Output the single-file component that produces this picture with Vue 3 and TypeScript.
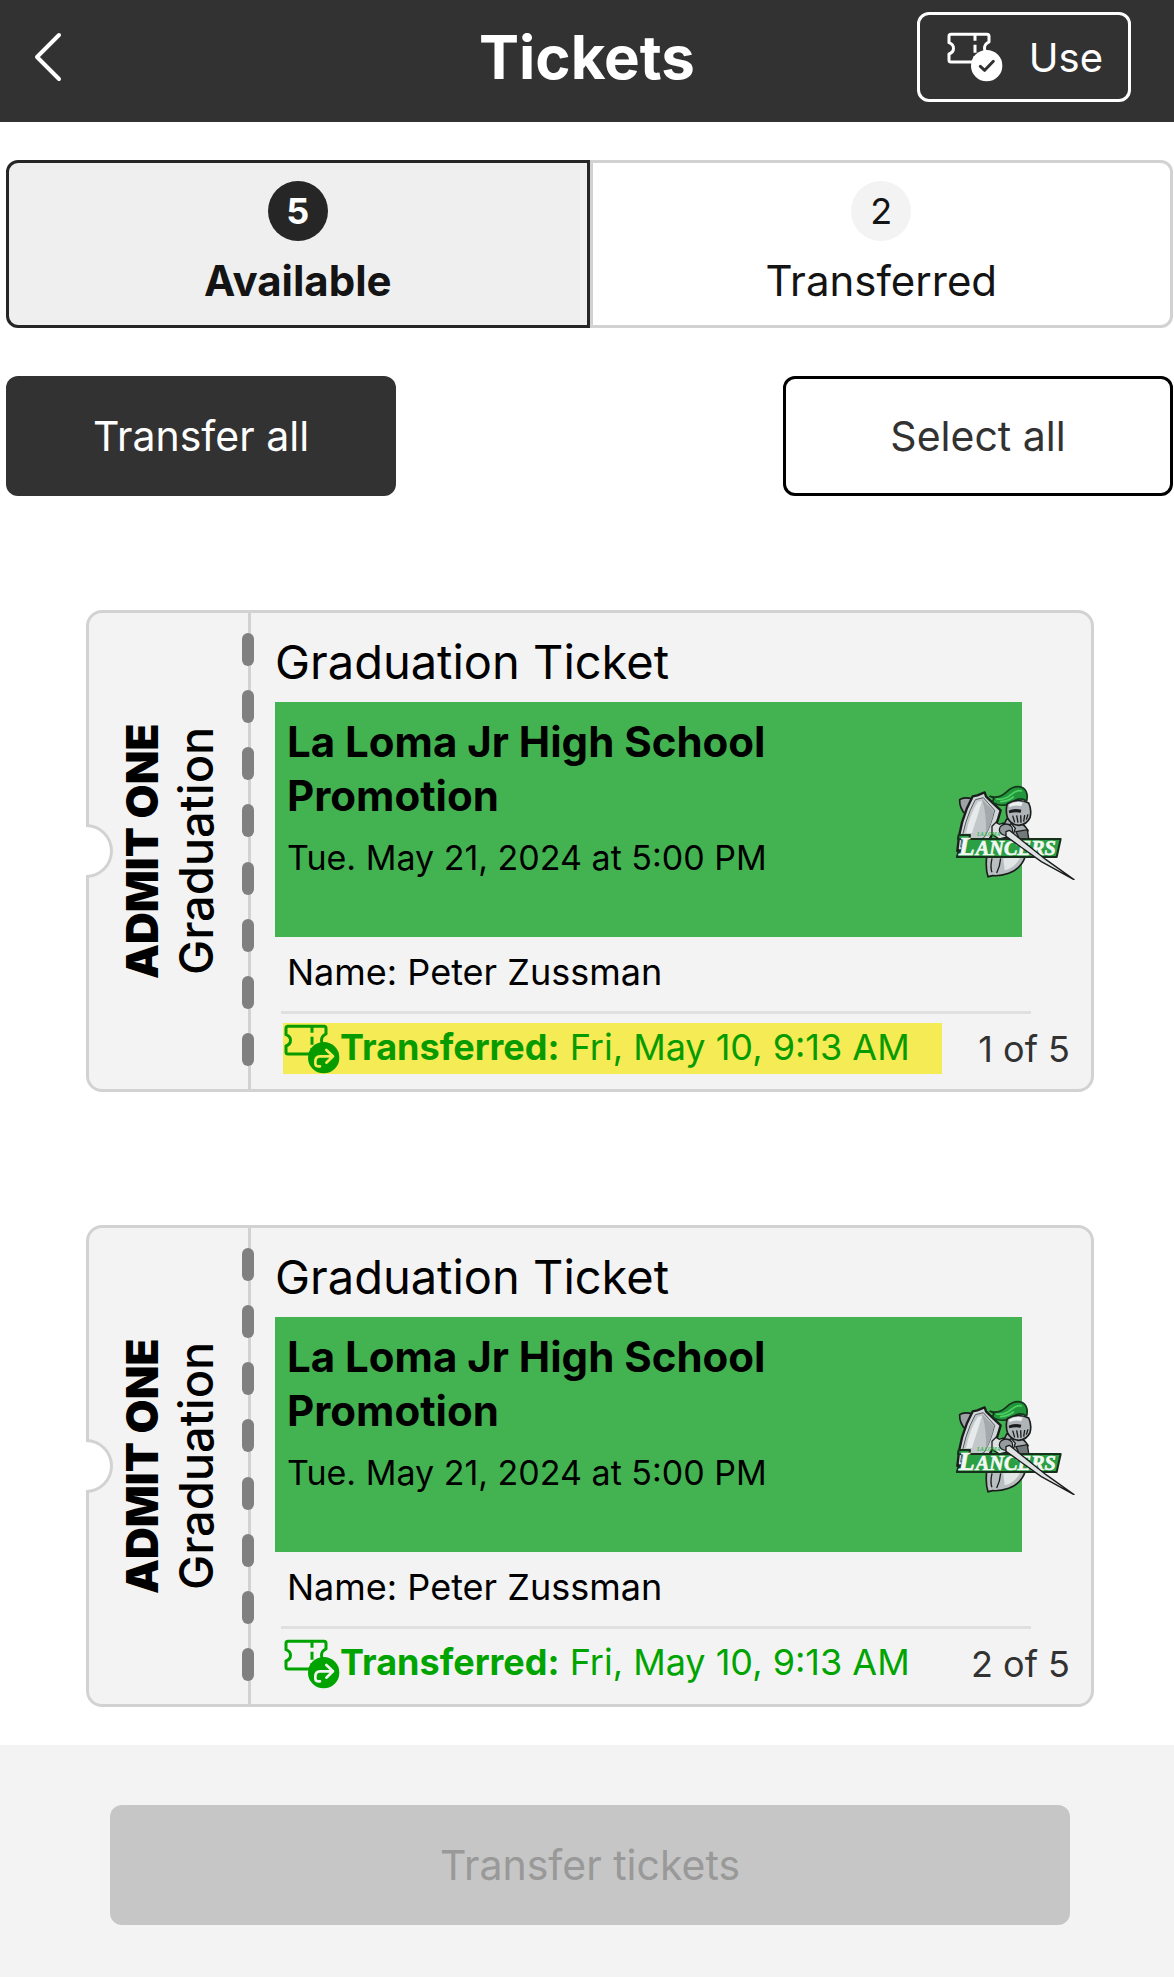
<script setup lang="ts">
import { ref } from 'vue'

interface Ticket {
  id: number
  kind: string
  category: string
  event: string
  date: string
  holder: string
  transferred: string
  highlighted: boolean
}

const totalTickets = 5
const activeTab = ref<'available' | 'transferred'>('available')

const tabs = [
  { key: 'available' as const, label: 'Available', count: 5 },
  { key: 'transferred' as const, label: 'Transferred', count: 2 },
]

const tickets: Ticket[] = [1, 2].map((id) => ({
  id,
  kind: 'Graduation Ticket',
  category: 'Graduation',
  event: 'La Loma Jr High School Promotion',
  date: 'Tue. May 21, 2024 at 5:00 PM',
  holder: 'Peter Zussman',
  transferred: 'Fri, May 10, 9:13 AM',
  highlighted: id === 1,
}))
</script>

<template>
  <div class="page">
    <header class="header">
      <button class="back" type="button" aria-label="Back">
        <svg viewBox="0 0 30 50" width="30" height="50" aria-hidden="true">
          <path d="M26 3 4 25l22 22" fill="none" stroke="#fff" stroke-width="4" stroke-linecap="round" stroke-linejoin="round" />
        </svg>
      </button>
      <h1 class="title">Tickets</h1>
      <button class="use" type="button">
        <svg class="ticket-icon" viewBox="42 46 168 150" aria-hidden="true">
          <path d="M54 53H162q6 0 6 6V76c-18 8-18 30 0 36V132q0 4-6 4H54q-6 0-6-6V112c18-6 18-28 0-34V59q0-6 6-6Z" fill="none" stroke="currentColor" stroke-width="9" stroke-linejoin="round" />
          <path d="M126 54v18M126 84v24M126 118v18" stroke="currentColor" stroke-width="9" />
          <circle cx="161" cy="147" r="47" fill="currentColor" />
          <path d="M142 149l13 12 26-27" fill="none" stroke="#323232" stroke-width="9" stroke-linecap="round" stroke-linejoin="round" />
        </svg>
        <span>Use</span>
      </button>
    </header>

    <main class="content">
      <div class="tabs" role="tablist">
        <button
          v-for="tab in tabs"
          :key="tab.key"
          class="tab"
          :class="{ active: activeTab === tab.key }"
          type="button"
          role="tab"
          :aria-selected="activeTab === tab.key"
          @click="activeTab = tab.key"
        >
          <span class="count">{{ tab.count }}</span>
          <span class="tab-label">{{ tab.label }}</span>
        </button>
      </div>

      <div class="actions">
        <button class="btn dark" type="button">Transfer all</button>
        <button class="btn outline" type="button">Select all</button>
      </div>

      <div class="tickets">
        <article v-for="ticket in tickets" :key="ticket.id" class="ticket">
          <span class="notch"></span>
          <div class="stub">
            <div class="stub-text">
              <strong class="admit">ADMIT ONE</strong>
              <span class="category">{{ ticket.category }}</span>
            </div>
            <div class="perforation" aria-hidden="true">
              <i v-for="n in 8" :key="n" class="dash"></i>
            </div>
          </div>

          <div class="details">
            <h2 class="kind">{{ ticket.kind }}</h2>
            <div class="banner">
              <h3 class="event">{{ ticket.event }}</h3>
              <p class="date">{{ ticket.date }}</p>
              <svg class="logo" viewBox="80 70 360 291" role="img" aria-label="La Loma Lancers">
                <!-- body armour below the wordmark -->
                <path d="M172 290q-4 36 4 61l14-3q22 2 48-7 38-14 50-51Z" fill="#b9bfc1" stroke="#1b1d1d" stroke-width="5" />
                <path d="M188 296q-6 28 0 42M214 296q-2 24-12 44" fill="none" stroke="#1b1d1d" stroke-width="4" />
                <path d="M222 296l50-2q-14 30-46 38Z" fill="#e3e6e7" />
                <!-- back plate and shield -->
                <path d="M130 118q-26-8-39 2-1 26 18 44" fill="#9da3a5" stroke="#1b1d1d" stroke-width="5" />
                <path d="M84 274q6-92 46-164l14-3 22-9 4 12q18 18 44 42-16 58-36 92l-70 26Z" fill="#d3d7d9" stroke="#1b1d1d" stroke-width="7" stroke-linejoin="round" />
                <path d="M94 262q10-80 44-142l24-6q16 18 34 38-12 50-32 82Z" fill="#c2c7ca" stroke="#53595b" stroke-width="3" />
                <path d="M110 220q12-58 36-94l12-2q-14 46-30 96Z" fill="#e6eaeb" />
                <path d="M158 118q16 18 36 36-8 40-24 70 2-62-12-106Z" fill="#a3a9ac" />
                <!-- shoulder and glove -->
                <path d="M232 178q44 2 64 34-8 30-44 34l-50-6Z" fill="#a9afb2" stroke="#1b1d1d" stroke-width="5" />
                <path d="M188 200l12-12 10 6 12-4 10 10 14-8 12 14-8 22-40 10-22-14Z" fill="#dde0e1" stroke="#1b1d1d" stroke-width="4" />
                <path d="M260 216l34-6 4 26-26 6Z" fill="#72797b" stroke="#1b1d1d" stroke-width="4" />
                <!-- plume -->
                <path d="M182 110q26 8 48-12 26-24 50-14 18 12 12 40-22-14-40 2-26 16-50 8-16-6-10-14 6-4-10-10Z" fill="#21963a" stroke="#14361c" stroke-width="5" stroke-linejoin="round" />
                <path d="M202 118q24 4 44-14 16-14 30-10M214 126q24-2 38-14" fill="none" stroke="#4fd167" stroke-width="5" stroke-linecap="round" />
                <!-- helmet -->
                <path d="M234 132q30-18 64-2 10 20 4 44-10 22-34 23-24-2-34-24-6-22 0-41Z" fill="#aeb4b7" stroke="#1b1d1d" stroke-width="5" />
                <path d="M240 134q24-12 40-5l-4 10q-22-4-36 4Z" fill="#edf0f0" />
                <path d="M238 153q14-8 38-3l-2 9q-18-3-34 2Z" fill="#1b1d1d" />
                <path d="M250 168l6 20M262 167l4 22M274 167l1 22M286 166l-3 20M296 164l-5 16" stroke="#1b1d1d" stroke-width="4" />
                <!-- wordmark -->
                <path d="M88 226h34l-2 12h274l-12 54H82l5-14 10-3 6-36-17-1Z" fill="#2a9f43" stroke="#17301c" stroke-width="6" stroke-linejoin="round" />
                <text class="logo-small" x="143" y="228">LA LOMA</text>
                <text class="logo-initial" x="88" y="287">L</text>
                <text class="logo-word" x="139" y="287">ANCERS</text>
                <!-- lance -->
                <ellipse cx="230" cy="210" rx="20" ry="17" fill="#959c9f" stroke="#1b1d1d" stroke-width="4" />
                <path d="M230 216l10-4 110 88 84 60-98-54L230 230Z" fill="#dfe2e2" stroke="#1b1d1d" stroke-width="4" stroke-linejoin="round" />
              </svg>
            </div>
            <p class="holder">Name: {{ ticket.holder }}</p>
            <hr class="rule" />
            <div class="footer-row">
              <div class="status" :class="{ highlighted: ticket.highlighted }">
                <svg class="ticket-icon" viewBox="42 46 168 150" aria-hidden="true">
                  <path d="M54 53H162q6 0 6 6V76c-18 8-18 30 0 36V132q0 4-6 4H54q-6 0-6-6V112c18-6 18-28 0-34V59q0-6 6-6Z" fill="none" stroke="currentColor" stroke-width="9" stroke-linejoin="round" />
                  <path d="M126 54v18M126 84v24M126 118v18" stroke="currentColor" stroke-width="9" />
                  <circle cx="161" cy="147" r="47" fill="currentColor" />
                  <path class="arrow" d="M150 173h-6q-8 0-8-9v-5q0-16 14-16h38M169 124l20 19-20 19" fill="none" stroke-width="8" stroke-linecap="round" stroke-linejoin="round" />
                </svg>
                <span><strong>Transferred:</strong> {{ ticket.transferred }}</span>
              </div>
              <span class="index">{{ ticket.id }} of {{ totalTickets }}</span>
            </div>
          </div>
        </article>
      </div>
    </main>

    <footer class="bottom-bar">
      <button class="btn submit" type="button" disabled>Transfer tickets</button>
    </footer>
  </div>
</template>

<style>
body {
  margin: 0;
  background: #fff;
}
</style>

<style scoped>
.page {
  min-height: 100vh;
  display: flex;
  flex-direction: column;
  font-family: Inter, Roboto, sans-serif;
  color: #000;
}

button {
  margin: 0;
  font-family: inherit;
  cursor: pointer;
}

h1,
h2,
h3,
p {
  margin: 0;
}

.header {
  display: grid;
  grid-template-columns: 1fr auto 1fr;
  align-items: center;
  padding: 12px 33px 20px;
  background: #323232;
  color: #fff;
}

.back {
  justify-self: start;
  display: flex;
  padding: 0;
  border: 0;
  background: none;
}

.title {
  font-size: 60px;
  line-height: 64px;
  font-weight: 700;
}

.use {
  justify-self: end;
  display: flex;
  align-items: center;
  gap: 26px;
  height: 90px;
  box-sizing: border-box;
  margin-right: 10px;
  padding: 0 25px 0 27px;
  border: 3px solid #fff;
  border-radius: 12px;
  background: none;
  color: #fff;
  font-size: 40px;
  font-weight: 400;
}

.ticket-icon {
  flex: none;
  width: 56px;
  height: 50px;
}

.content {
  flex: 1;
}

.tabs {
  display: flex;
  padding: 38px 1px 0 6px;
}

.tab {
  flex: 1;
  display: flex;
  flex-direction: column;
  align-items: center;
  gap: 15px;
  padding: 18px 0 19px;
  border: 3px solid #d2d2d2;
  border-radius: 0 12px 12px 0;
  background: #fff;
  color: #141414;
  font-size: 42px;
}

.tab:first-child {
  border-radius: 12px 0 0 12px;
}

.tab.active {
  border-color: #262626;
  background: #efefef;
  font-weight: 700;
}

.count {
  display: grid;
  place-items: center;
  width: 60px;
  height: 60px;
  border-radius: 50%;
  background: #f3f3f3;
  font-size: 36px;
}

.tab.active .count {
  background: #262626;
  color: #fff;
}

.tab-label {
  line-height: 50px;
}

.actions {
  display: flex;
  justify-content: space-between;
  padding: 48px 1px 0 6px;
}

.btn {
  height: 120px;
  box-sizing: border-box;
  border: 0;
  border-radius: 12px;
  font-size: 41px;
  font-weight: 400;
}

.actions .btn {
  width: 390px;
}

.dark {
  background: #323232;
  color: #fff;
}

.outline {
  border: 3px solid #000;
  background: #fff;
  color: #323232;
}

.tickets {
  display: flex;
  flex-direction: column;
  gap: 133px;
  padding: 114px 80px 38px 86px;
}

.ticket {
  position: relative;
  display: flex;
  border: 3px solid #d2d2d2;
  border-radius: 16px;
  background: #f3f3f3;
}

/* half-round cut-out over the left edge */
.notch {
  position: absolute;
  left: -3px;
  top: 50%;
  width: 27px;
  height: 54px;
  box-sizing: border-box;
  transform: translateY(-50%);
  border: 3px solid #d2d2d2;
  border-left: 0;
  border-radius: 0 27px 27px 0;
  background: #fff;
}

.stub {
  flex: none;
  display: flex;
  width: 165px;
}

/* rotated so that both lines read from bottom to top */
.stub-text {
  flex: 1;
  display: flex;
  flex-direction: column;
  align-items: center;
  padding-right: 26px;
  writing-mode: vertical-rl;
  transform: rotate(180deg);
}

.admit,
.category {
  line-height: 54px;
}

.admit {
  font-size: 44px;
  font-weight: 900;
}

.category {
  font-size: 47px;
  font-weight: 500;
}

.perforation {
  flex: none;
  display: flex;
  flex-direction: column;
  align-items: center;
  justify-content: space-between;
  width: 12px;
  padding: 20px 0 23px;
  background: linear-gradient(#d2d2d2, #d2d2d2) 6px 0 / 3px 100% no-repeat;
}

.dash {
  width: 12px;
  height: 33px;
  border-radius: 6px;
  background: #808080;
}

.details {
  flex: 1;
  min-width: 0;
  padding: 21px 21px 15px;
}

.kind {
  font-size: 47px;
  line-height: 56px;
  font-weight: 400;
}

.banner {
  position: relative;
  min-height: 235px;
  box-sizing: border-box;
  margin: 12px 48px 0 0;
  padding: 13px 180px 0 12px;
  background: #42b350;
}

.event {
  font-size: 42px;
  line-height: 54px;
  font-weight: 700;
}

.date {
  margin-top: 13px;
  font-size: 34px;
  line-height: 44px;
  white-space: nowrap;
}

.logo {
  position: absolute;
  right: -54px;
  top: 81px;
  width: 120px;
  height: 97px;
}

.logo-small,
.logo-initial,
.logo-word {
  font-family: "Liberation Serif", serif;
  font-style: italic;
  font-weight: 700;
}

.logo-small {
  font-size: 16px;
  fill: #2cb84a;
}

.logo-initial,
.logo-word {
  fill: #f4f7f4;
  stroke: #f4f7f4;
  stroke-width: 2px;
}

.logo-initial {
  font-size: 78px;
}

.logo-word {
  font-size: 61px;
}

.holder {
  margin: 13px 0 17px 12px;
  font-size: 36px;
  line-height: 44px;
}

.rule {
  height: 3px;
  margin: 0 39px 9px 6px;
  border: 0;
  background: #e0e0e0;
}

.footer-row {
  display: flex;
  align-items: center;
  justify-content: space-between;
  padding-left: 8px;
}

.status {
  display: flex;
  align-items: flex-start;
  box-sizing: border-box;
  height: 51px;
  padding: 1px 32px 0 1px;
  color: #00a400;
  font-size: 36px;
  line-height: 46px;
  white-space: nowrap;
}

.status.highlighted {
  background: #f4eb55;
  color: #089b00;
}

.arrow {
  stroke: #f3f3f3;
}

.highlighted .arrow {
  stroke: #f4eb55;
}

.index {
  color: #323232;
  font-size: 36px;
  white-space: nowrap;
}

.bottom-bar {
  display: flex;
  padding: 60px 104px 52px 110px;
  background: #f3f3f3;
}

.submit {
  flex: 1;
  background: #c6c6c6;
  color: #999;
  cursor: default;
}
</style>
